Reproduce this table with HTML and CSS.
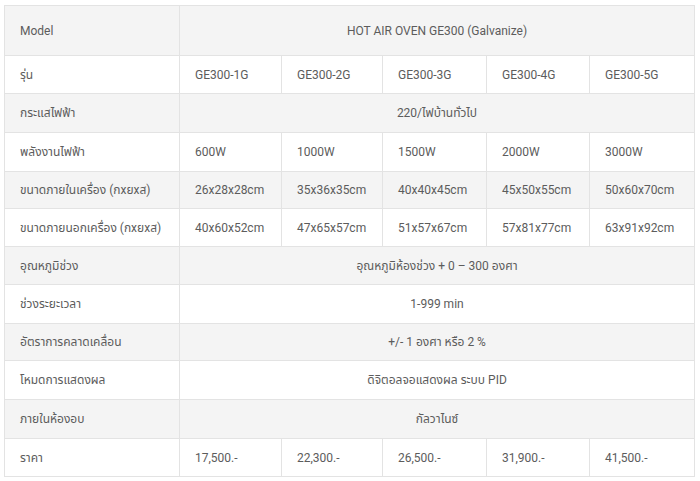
FILE: index.html
```html
<!DOCTYPE html>
<html lang="th">
<head>
<meta charset="utf-8">
<title>HOT AIR OVEN GE300</title>
<link rel="stylesheet" href="styles.css">
</head>
<body>
<div class="wrap">
<table class="spec">
  <colgroup>
    <col class="c-label"><col class="c1"><col class="c2"><col class="c3"><col class="c4"><col class="c5">
  </colgroup>
  <tbody>
    <tr class="alt r-head"><td>Model</td><td colspan="5" class="center">HOT AIR OVEN GE300 (Galvanize)</td></tr>
    <tr class="r38"><td>รุ่น</td><td>GE300-1G</td><td>GE300-2G</td><td>GE300-3G</td><td>GE300-4G</td><td>GE300-5G</td></tr>
    <tr class="alt r39"><td>กระแสไฟฟ้า</td><td colspan="5" class="center">220/ไฟบ้านทั่วไป</td></tr>
    <tr class="r39"><td>พลังงานไฟฟ้า</td><td>600W</td><td>1000W</td><td>1500W</td><td>2000W</td><td>3000W</td></tr>
    <tr class="alt r37"><td>ขนาดภายในเครื่อง (กxยxส)</td><td>26x28x28cm</td><td>35x36x35cm</td><td>40x40x45cm</td><td>45x50x55cm</td><td>50x60x70cm</td></tr>
    <tr class="r38"><td>ขนาดภายนอกเครื่อง (กxยxส)</td><td>40x60x52cm</td><td>47x65x57cm</td><td>51x57x67cm</td><td>57x81x77cm</td><td>63x91x92cm</td></tr>
    <tr class="alt r38"><td>อุณหภูมิช่วง</td><td colspan="5" class="center">อุณหภูมิห้องช่วง + 0 – 300 องศา</td></tr>
    <tr class="r39"><td>ช่วงระยะเวลา</td><td colspan="5" class="center">1-999 min</td></tr>
    <tr class="alt r37"><td>อัตราการคลาดเคลื่อน</td><td colspan="5" class="center">+/- 1 องศา หรือ 2 %</td></tr>
    <tr class="r39"><td>โหมดการแสดงผล</td><td colspan="5" class="center">ดิจิตอลจอแสดงผล ระบบ PID</td></tr>
    <tr class="alt r39"><td>ภายในห้องอบ</td><td colspan="5" class="center">กัลวาไนซ์</td></tr>
    <tr class="r38"><td>ราคา</td><td>17,500.-</td><td>22,300.-</td><td>26,500.-</td><td>31,900.-</td><td>41,500.-</td></tr>
  </tbody>
</table>
</div>
</body>
</html>
```
FILE: styles.css
```css
html, body {
  margin: 0;
  padding: 0;
  background: #ffffff;
}
.wrap {
  padding: 5px 0 0 4px;
}
.spec {
  border-collapse: collapse;
  table-layout: fixed;
  width: 690px;
  font-family: Roboto, "Noto Sans Thai", "Noto Sans", sans-serif;
  font-size: 12px;
  color: #5c5c5c;
}
.c-label { width: 175px; }
.c1 { width: 102px; }
.c2 { width: 101px; }
.c3 { width: 104px; }
.c4 { width: 103px; }
.c5 { width: 105px; }
.spec td {
  border: 1px solid #e3e3e3;
  padding: 0 15px;
  text-align: left;
  vertical-align: middle;
  white-space: nowrap;
}
.spec td.center {
  text-align: center;
}
.alt td {
  background: #f4f4f4;
}
.r-head { height: 50px; }
.r37 { height: 37px; }
.r38 { height: 38px; }
.r39 { height: 39px; }
```
